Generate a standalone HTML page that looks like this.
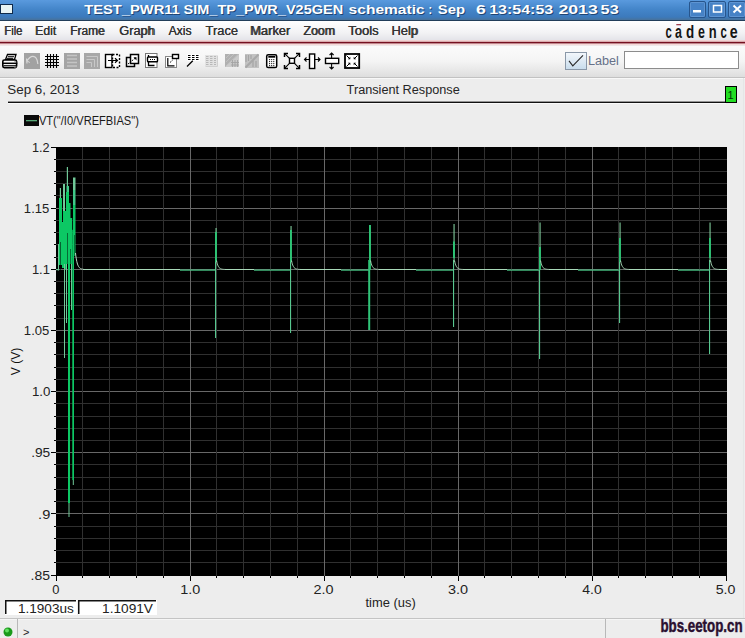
<!DOCTYPE html>
<html><head><meta charset="utf-8">
<style>
html,body{margin:0;padding:0;width:745px;height:638px;overflow:hidden;background:#ededed;}
svg{position:absolute;left:0;top:0;display:block;}
text{font-family:"Liberation Sans", sans-serif;}
</style></head><body>
<svg width="745" height="638" viewBox="0 0 745 638">
<defs>
<linearGradient id="tbg" x1="0" y1="0" x2="0" y2="1">
<stop offset="0" stop-color="#5a9ade"/><stop offset="0.45" stop-color="#4486ca"/><stop offset="0.85" stop-color="#3c7abc"/><stop offset="1" stop-color="#48729a"/>
</linearGradient>
<linearGradient id="mbg" x1="0" y1="0" x2="0" y2="1">
<stop offset="0" stop-color="#ffffff"/><stop offset="0.6" stop-color="#f2f2f4"/><stop offset="1" stop-color="#e2e2e8"/>
</linearGradient>
<linearGradient id="tbbg" x1="0" y1="0" x2="0" y2="1">
<stop offset="0" stop-color="#fbfbfb"/><stop offset="0.5" stop-color="#f4f4f4"/><stop offset="1" stop-color="#dedede"/>
</linearGradient>
</defs>
<!-- title bar -->
<rect x="0" y="0" width="745" height="20" fill="url(#tbg)"/>
<rect x="0" y="20" width="745" height="1" fill="#223e5a"/>
<!-- menu bar -->
<rect x="0" y="21" width="745" height="20" fill="url(#mbg)"/>
<rect x="0" y="40" width="745" height="2" fill="#f2d2d2"/>
<rect x="0" y="41.8" width="745" height="1.9" fill="#761020"/>
<rect x="0" y="43.6" width="745" height="1.6" fill="#f6d8d8"/>
<!-- toolbar -->
<rect x="0" y="46" width="745" height="31" fill="url(#tbbg)"/>
<rect x="0" y="77" width="745" height="1" fill="#c2c2c2"/>
<rect x="0" y="78" width="745" height="1" fill="#f8f8f8"/>

<!-- toolbar icons -->
<g fill="none" stroke="#000" stroke-linecap="square">
<!-- 1 printer -->
<path d="M7.5,54.5 H16 L14.5,59.5 H5.5 Z" fill="#fff" stroke-width="1.3"/>
<path d="M8.5,56.7 H13.5 M7.5,58.3 H12.5" stroke-width="1"/>
<rect x="2.8" y="60" width="13.8" height="7.6" rx="1.5" fill="#fff" stroke-width="1.6"/>
<path d="M3,63.3 H16.5" stroke-width="1.5"/>
<path d="M4,65.7 H15.5" stroke-width="1"/>
<path d="M14.5,62 h1.5 M14.5,67 h1.5" stroke="#888" stroke-width="1"/>
</g>
<!-- 2 undo grey -->
<rect x="24" y="53" width="16" height="16" fill="#a2a2a2"/>
<path d="M26.5,58.5 L27,63.5 M26.5,61.5 Q31,54.5 35,57 Q37.5,59 37.8,64" fill="none" stroke="#d8d8d8" stroke-width="1.2"/>
<path d="M27,61 L29.8,62.5" stroke="#d8d8d8" stroke-width="1"/>
<!-- 3 grid -->
<g stroke="#000" stroke-width="1.1">
<path d="M47.5,54 V68 M50.5,54 V68 M53.5,54 V68 M56.5,54 V68"/>
<path d="M45,56.5 H59 M45,59.5 H59 M45,62.5 H59 M45,65.5 H59"/>
</g>
<!-- 4 grey stripes -->
<rect x="64" y="53" width="16" height="16" fill="#a4a4a4"/>
<g stroke="#c4c4c4" stroke-width="1.3"><path d="M67,55.5 H77 M67,59 H77 M67,62.5 H77 M67,66 H77"/></g>
<!-- 5 grey multi -->
<rect x="84" y="53" width="16" height="16" fill="#a8a8a8"/>
<path d="M86.5,56.5 H97.5 V67 M86.5,59.5 H94.5 V67 M86.5,62.5 H91.5 V67" fill="none" stroke="#c8c8c8" stroke-width="1"/>
<!-- 6 split -->
<rect x="105.5" y="54.5" width="6.5" height="13" fill="#fff" stroke="#000" stroke-width="1.4"/>
<rect x="112.5" y="54.5" width="7" height="13" fill="#fff" stroke="#000" stroke-width="1.4" stroke-dasharray="2,1.5"/>
<path d="M108,60.5 H117.5 M115,58.3 L117.5,60.5 L115,62.7" fill="none" stroke="#000" stroke-width="1.2"/>
<!-- 7 two squares -->
<rect x="126.5" y="57.5" width="8" height="9" fill="#fff" stroke="#000" stroke-width="1.5"/>
<rect x="130.5" y="54.5" width="8" height="9" fill="#fff" stroke="#000" stroke-width="1.5"/>
<path d="M128,64 L136,57.5" stroke="#000" stroke-width="1" stroke-dasharray="1.5,1"/>
<path d="M133.5,57.3 H136.5 V60.5 Z" fill="#000"/>
<!-- 8 -->
<rect x="145.5" y="53.5" width="11.5" height="14" fill="#fff" stroke="#777" stroke-width="1"/>
<path d="M148.5,55 V65.5 H154.5" fill="none" stroke="#000" stroke-width="1.3"/>
<rect x="147.5" y="57" width="10" height="4.8" rx="0.8" fill="#fff" stroke="#000" stroke-width="1.4"/>
<path d="M150,59.5 h1 M152,59.5 h1 M154,59.5 h1" stroke="#000" stroke-width="1.2"/>
<!-- 9 -->
<rect x="165.5" y="56.5" width="11" height="11" fill="#fff" stroke="#888" stroke-width="1"/>
<path d="M167.8,58 V65.8 H174.5" fill="none" stroke="#000" stroke-width="1.2"/>
<rect x="172.5" y="54.5" width="6" height="4" fill="#fff" stroke="#000" stroke-width="1.4"/>
<path d="M170,62.5 L173,59.8" stroke="#000" stroke-width="1" stroke-dasharray="1.2,1"/>
<!-- 10 -->
<rect x="187.5" y="54" width="12.5" height="7" fill="#fff"/>
<g stroke="#000" stroke-width="1.1"><path d="M188,55.5 h2.5 M192,55.5 h2.5 M196,55.5 h2.5 M188,57.5 h2.5 M192,57.5 h2.5 M196,57.5 h2.5 M188,59.5 h2.5 M192,59.5 h2.5 M196,59.5 h2.5"/></g>
<path d="M187,66.5 L192.8,60.8" stroke="#000" stroke-width="1.3"/>
<!-- 11 faint table -->
<rect x="205" y="55" width="12" height="11" fill="#e2e2e2"/>
<g stroke="#b8b8b8" stroke-width="1"><path d="M206,56.5 h2.5 M210,56.5 h2.5 M214,56.5 h2 M206,58.5 h2.5 M210,58.5 h2.5 M214,58.5 h2 M206,60.5 h2.5 M210,60.5 h2.5 M214,60.5 h2 M206,62.5 h2.5 M210,62.5 h2.5 M214,62.5 h2 M206,64.5 h2.5 M210,64.5 h2.5 M214,64.5 h2"/></g>
<path d="M217.5,55.5 V66.5 H205.5" fill="none" stroke="#d0d0d0" stroke-width="1"/>
<!-- 12 grey diag -->
<rect x="225" y="54" width="14" height="13" fill="#cacaca"/>
<path d="M225,54 H239 L225,67 Z" fill="#b0b0b0"/>
<path d="M226,58 L230,54 M226,62 L234,54 M226,66 L238,54.5" stroke="#c4c4c4" stroke-width="0.8"/>
<path d="M232.5,60 V67 M235,60 V67 M237.5,60 V67 M231,62.5 H239 M231,65 H239" stroke="#a4a4a4" stroke-width="0.9"/>
<!-- 13 grey -->
<rect x="245" y="54" width="14" height="14" fill="#c2c2c2"/>
<path d="M246,55 V62 M248.5,55 V61 M251,55 V59" stroke="#a4a4a4" stroke-width="1.2"/>
<path d="M245.5,67.5 L258.5,54.5" stroke="#a8a8a8" stroke-width="2"/>
<path d="M253,61 V67 M256,61 V67" stroke="#a4a4a4" stroke-width="1.2"/>
<!-- 14 calculator -->
<rect x="266.7" y="54.7" width="10" height="12.8" rx="1.6" fill="#fff" stroke="#000" stroke-width="1.5"/>
<rect x="268.3" y="56" width="7" height="1.7" fill="#000"/>
<g fill="#000">
<circle cx="269.6" cy="59.6" r="0.6"/><circle cx="271.7" cy="59.6" r="0.6"/><circle cx="273.8" cy="59.6" r="0.6"/>
<circle cx="269.6" cy="61.6" r="0.6"/><circle cx="271.7" cy="61.6" r="0.6"/><circle cx="273.8" cy="61.6" r="0.6"/>
<circle cx="269.6" cy="63.6" r="0.6"/><circle cx="271.7" cy="63.6" r="0.6"/><circle cx="273.8" cy="63.6" r="0.6"/>
<circle cx="269.6" cy="65.6" r="0.6"/><circle cx="271.7" cy="65.6" r="0.6"/><circle cx="273.8" cy="65.6" r="0.6"/>
</g>
<!-- 15 expand -->
<rect x="289.5" y="58.3" width="5" height="5" fill="#fff" stroke="#000" stroke-width="1.4"/>
<g stroke="#000" stroke-width="1.1" fill="none">
<path d="M289.5,58.3 L285,53.8 M294.5,58.3 L299,53.8 M289.5,63.3 L285,67.8 M294.5,63.3 L299,67.8"/>
</g>
<g stroke="#000" stroke-width="1.5" fill="none">
<path d="M284.5,57 V53.5 H288 M296,53.5 H299.5 V57 M284.5,65 V68.5 H288 M296,68.5 H299.5 V65"/>
</g>
<!-- 16 horiz arrows -->
<rect x="309.5" y="54" width="5.2" height="14.5" fill="#fff" stroke="#000" stroke-width="1.4"/>
<path d="M304.5,59.5 H309 M315,59.5 H320 M306.5,57.5 L304.5,59.5 L306.5,61.5 M318,57.5 L320,59.5 L318,61.5" fill="none" stroke="#000" stroke-width="1.1"/>
<!-- 17 vert arrows -->
<rect x="325.5" y="58.3" width="13.2" height="5.2" fill="#fff" stroke="#000" stroke-width="1.4"/>
<path d="M331.6,53 V58 M331.6,64 V69 M329.6,55 L331.6,53 L333.6,55 M329.6,67 L331.6,69 L333.6,67" fill="none" stroke="#000" stroke-width="1.1"/>
<!-- 18 box inward -->
<rect x="345" y="54" width="14.2" height="14" fill="#fff" stroke="#000" stroke-width="1.8"/>
<g stroke="#000" stroke-width="1" fill="none"><path d="M346.5,55.5 L350,59 M357.5,55.5 L354,59 M346.5,66.5 L350,63 M357.5,66.5 L354,63"/></g>
<g fill="#000"><path d="M350.3,56.8 V59.3 H347.8 Z M353.7,56.8 V59.3 H356.2 Z M350.3,65.2 V62.7 H347.8 Z M353.7,65.2 V62.7 H356.2 Z"/></g>

<!-- window buttons -->
<g stroke="#27558c" stroke-width="1" fill="#4682c6">
<rect x="689.5" y="1.5" width="16" height="16" rx="1.5"/>
<rect x="708.5" y="1.5" width="17" height="16" rx="1.5"/>
<rect x="728.5" y="1.5" width="17" height="16" rx="1.5"/>
</g>
<g stroke="#6a9ed8" stroke-width="1" fill="none" opacity="0.7">
<rect x="690.5" y="2.5" width="14" height="14" rx="1"/>
<rect x="709.5" y="2.5" width="15" height="14" rx="1"/>
<rect x="729.5" y="2.5" width="15" height="14" rx="1"/>
</g>
<rect x="693" y="10" width="8" height="2.5" fill="#fff"/>
<rect x="713.5" y="5.5" width="8" height="6.5" fill="none" stroke="#fff" stroke-width="1.5"/>
<path d="M733.5,5.5 L741,12.5 M741,5.5 L733.5,12.5" stroke="#fff" stroke-width="2"/>
<!-- window icon -->
<rect x="0" y="4" width="13" height="10" fill="#0f2a4a"/>
<rect x="1" y="5" width="11" height="8" fill="#e8f4f4"/>
<!-- label checkbox -->
<defs><linearGradient id="cbg" x1="0" y1="0" x2="0" y2="1"><stop offset="0" stop-color="#f4f8fc"/><stop offset="1" stop-color="#c8dcec"/></linearGradient></defs>
<rect x="565.5" y="52.5" width="21" height="17" fill="url(#cbg)" stroke="#8a98a8"/>
<path d="M569,60.8 L572.8,65.8 L583,55.3" fill="none" stroke="#2a2a2a" stroke-width="1.1"/>
<!-- label input -->
<rect x="624.5" y="51.5" width="114" height="17" fill="#fff" stroke="#8c8c8c"/>
<!-- date line -->
<rect x="8" y="101.6" width="718" height="1.4" fill="#111"/>
<rect x="8" y="103" width="718" height="1" fill="#fafafa"/>
<rect x="725.5" y="86.5" width="11" height="16" fill="#22dd22" stroke="#000"/>
<!-- legend box -->
<rect x="24" y="115" width="15" height="11" fill="#0a0a0a"/>
<rect x="26" y="120" width="11" height="1.3" fill="#58a878"/>
<!-- marker value boxes -->
<rect x="5" y="600" width="72" height="15" fill="#fff"/>
<rect x="5" y="600" width="71" height="1.5" fill="#111"/>
<rect x="5" y="600" width="1.5" height="14" fill="#111"/>
<rect x="78" y="600" width="79" height="15" fill="#fff"/>
<rect x="78" y="600" width="78" height="1.5" fill="#111"/>
<rect x="78" y="600" width="1.5" height="14" fill="#111"/>
<!-- status bar -->
<rect x="0" y="618" width="745" height="1" fill="#c4c4c4"/>
<rect x="0" y="619" width="745" height="1" fill="#f6f6f6"/>
<rect x="17" y="619" width="1" height="19" fill="#b8b8b8"/>
<rect x="605" y="619" width="1" height="19" fill="#b8b8b8"/>
<circle cx="8" cy="632" r="4.5" fill="#1a9a1a"/>
<circle cx="7" cy="630.5" r="2" fill="#60e060"/>
<rect x="743" y="78" width="1" height="540" fill="#e6e6e6"/>

<!-- plot -->
<rect x="56" y="147" width="671" height="429" fill="#000"/>
<rect x="56" y="159" width="671" height="1" fill="#303030"/>
<rect x="56" y="171" width="671" height="1" fill="#303030"/>
<rect x="56" y="183" width="671" height="1" fill="#303030"/>
<rect x="56" y="195" width="671" height="1" fill="#303030"/>
<rect x="56" y="208" width="671" height="1" fill="#686868"/>
<rect x="56" y="220" width="671" height="1" fill="#303030"/>
<rect x="56" y="232" width="671" height="1" fill="#303030"/>
<rect x="56" y="244" width="671" height="1" fill="#303030"/>
<rect x="56" y="257" width="671" height="1" fill="#303030"/>
<rect x="56" y="269" width="671" height="1" fill="#686868"/>
<rect x="56" y="281" width="671" height="1" fill="#303030"/>
<rect x="56" y="293" width="671" height="1" fill="#303030"/>
<rect x="56" y="305" width="671" height="1" fill="#303030"/>
<rect x="56" y="318" width="671" height="1" fill="#303030"/>
<rect x="56" y="330" width="671" height="1" fill="#686868"/>
<rect x="56" y="342" width="671" height="1" fill="#303030"/>
<rect x="56" y="354" width="671" height="1" fill="#303030"/>
<rect x="56" y="367" width="671" height="1" fill="#303030"/>
<rect x="56" y="379" width="671" height="1" fill="#303030"/>
<rect x="56" y="391" width="671" height="1" fill="#686868"/>
<rect x="56" y="403" width="671" height="1" fill="#303030"/>
<rect x="56" y="416" width="671" height="1" fill="#303030"/>
<rect x="56" y="428" width="671" height="1" fill="#303030"/>
<rect x="56" y="440" width="671" height="1" fill="#303030"/>
<rect x="56" y="452" width="671" height="1" fill="#686868"/>
<rect x="56" y="464" width="671" height="1" fill="#303030"/>
<rect x="56" y="477" width="671" height="1" fill="#303030"/>
<rect x="56" y="489" width="671" height="1" fill="#303030"/>
<rect x="56" y="501" width="671" height="1" fill="#303030"/>
<rect x="56" y="513" width="671" height="1" fill="#686868"/>
<rect x="56" y="526" width="671" height="1" fill="#303030"/>
<rect x="56" y="538" width="671" height="1" fill="#303030"/>
<rect x="56" y="550" width="671" height="1" fill="#303030"/>
<rect x="56" y="562" width="671" height="1" fill="#303030"/>
<rect x="82" y="147" width="1" height="429" fill="#303030"/>
<rect x="109" y="147" width="1" height="429" fill="#303030"/>
<rect x="136" y="147" width="1" height="429" fill="#303030"/>
<rect x="163" y="147" width="1" height="429" fill="#303030"/>
<rect x="190" y="147" width="1" height="429" fill="#686868"/>
<rect x="216" y="147" width="1" height="429" fill="#303030"/>
<rect x="243" y="147" width="1" height="429" fill="#303030"/>
<rect x="270" y="147" width="1" height="429" fill="#303030"/>
<rect x="297" y="147" width="1" height="429" fill="#303030"/>
<rect x="324" y="147" width="1" height="429" fill="#686868"/>
<rect x="350" y="147" width="1" height="429" fill="#303030"/>
<rect x="377" y="147" width="1" height="429" fill="#303030"/>
<rect x="404" y="147" width="1" height="429" fill="#303030"/>
<rect x="431" y="147" width="1" height="429" fill="#303030"/>
<rect x="458" y="147" width="1" height="429" fill="#686868"/>
<rect x="484" y="147" width="1" height="429" fill="#303030"/>
<rect x="511" y="147" width="1" height="429" fill="#303030"/>
<rect x="538" y="147" width="1" height="429" fill="#303030"/>
<rect x="565" y="147" width="1" height="429" fill="#303030"/>
<rect x="592" y="147" width="1" height="429" fill="#686868"/>
<rect x="618" y="147" width="1" height="429" fill="#303030"/>
<rect x="645" y="147" width="1" height="429" fill="#303030"/>
<rect x="672" y="147" width="1" height="429" fill="#303030"/>
<rect x="699" y="147" width="1" height="429" fill="#303030"/>
<rect x="51" y="147" width="5" height="1" fill="#000"/>
<rect x="54" y="159" width="2" height="1" fill="#000"/>
<rect x="54" y="171" width="2" height="1" fill="#000"/>
<rect x="54" y="183" width="2" height="1" fill="#000"/>
<rect x="54" y="195" width="2" height="1" fill="#000"/>
<rect x="51" y="208" width="5" height="1" fill="#000"/>
<rect x="54" y="220" width="2" height="1" fill="#000"/>
<rect x="54" y="232" width="2" height="1" fill="#000"/>
<rect x="54" y="244" width="2" height="1" fill="#000"/>
<rect x="54" y="257" width="2" height="1" fill="#000"/>
<rect x="51" y="269" width="5" height="1" fill="#000"/>
<rect x="54" y="281" width="2" height="1" fill="#000"/>
<rect x="54" y="293" width="2" height="1" fill="#000"/>
<rect x="54" y="305" width="2" height="1" fill="#000"/>
<rect x="54" y="318" width="2" height="1" fill="#000"/>
<rect x="51" y="330" width="5" height="1" fill="#000"/>
<rect x="54" y="342" width="2" height="1" fill="#000"/>
<rect x="54" y="354" width="2" height="1" fill="#000"/>
<rect x="54" y="367" width="2" height="1" fill="#000"/>
<rect x="54" y="379" width="2" height="1" fill="#000"/>
<rect x="51" y="391" width="5" height="1" fill="#000"/>
<rect x="54" y="403" width="2" height="1" fill="#000"/>
<rect x="54" y="416" width="2" height="1" fill="#000"/>
<rect x="54" y="428" width="2" height="1" fill="#000"/>
<rect x="54" y="440" width="2" height="1" fill="#000"/>
<rect x="51" y="452" width="5" height="1" fill="#000"/>
<rect x="54" y="464" width="2" height="1" fill="#000"/>
<rect x="54" y="477" width="2" height="1" fill="#000"/>
<rect x="54" y="489" width="2" height="1" fill="#000"/>
<rect x="54" y="501" width="2" height="1" fill="#000"/>
<rect x="51" y="513" width="5" height="1" fill="#000"/>
<rect x="54" y="526" width="2" height="1" fill="#000"/>
<rect x="54" y="538" width="2" height="1" fill="#000"/>
<rect x="54" y="550" width="2" height="1" fill="#000"/>
<rect x="54" y="562" width="2" height="1" fill="#000"/>
<rect x="51" y="575" width="5" height="1" fill="#000"/>
<rect x="56" y="576" width="1" height="5" fill="#000"/>
<rect x="82" y="576" width="1" height="2" fill="#000"/>
<rect x="109" y="576" width="1" height="2" fill="#000"/>
<rect x="136" y="576" width="1" height="2" fill="#000"/>
<rect x="163" y="576" width="1" height="2" fill="#000"/>
<rect x="190" y="576" width="1" height="5" fill="#000"/>
<rect x="216" y="576" width="1" height="2" fill="#000"/>
<rect x="243" y="576" width="1" height="2" fill="#000"/>
<rect x="270" y="576" width="1" height="2" fill="#000"/>
<rect x="297" y="576" width="1" height="2" fill="#000"/>
<rect x="324" y="576" width="1" height="5" fill="#000"/>
<rect x="350" y="576" width="1" height="2" fill="#000"/>
<rect x="377" y="576" width="1" height="2" fill="#000"/>
<rect x="404" y="576" width="1" height="2" fill="#000"/>
<rect x="431" y="576" width="1" height="2" fill="#000"/>
<rect x="458" y="576" width="1" height="5" fill="#000"/>
<rect x="484" y="576" width="1" height="2" fill="#000"/>
<rect x="511" y="576" width="1" height="2" fill="#000"/>
<rect x="538" y="576" width="1" height="2" fill="#000"/>
<rect x="565" y="576" width="1" height="2" fill="#000"/>
<rect x="592" y="576" width="1" height="5" fill="#000"/>
<rect x="618" y="576" width="1" height="2" fill="#000"/>
<rect x="645" y="576" width="1" height="2" fill="#000"/>
<rect x="672" y="576" width="1" height="2" fill="#000"/>
<rect x="699" y="576" width="1" height="2" fill="#000"/>
<rect x="726" y="576" width="1" height="5" fill="#000"/>
<rect x="83" y="269" width="97" height="1" fill="#a8d8b8"/>
<rect x="180" y="269.5" width="35" height="1.2" fill="#48c484"/>
<rect x="215" y="260" width="1.1" height="78" fill="#58c890"/>
<rect x="215.5" y="228" width="1.1" height="34" fill="#80cc9c"/>
<rect x="215" y="232" width="1.9" height="30" fill="#2cc474"/>
<polyline points="216.50,260.50 216.88,262.28 217.25,263.71 217.62,264.86 218.00,265.78 218.38,266.51 218.75,267.10 219.12,267.58 219.50,267.96 219.88,268.26 220.25,268.51 220.62,268.70 221.00,268.86 221.38,268.99 221.75,269.09 222.12,269.17 222.50,269.24 222.88,269.29 223.25,269.33 223.62,269.36 224.00,269.39 224.38,269.41 224.75,269.43 225.12,269.44 225.50,269.45" fill="none" stroke="#a8d8b8" stroke-width="1"/>
<rect x="225" y="269" width="29" height="1" fill="#a8d8b8"/>
<rect x="254" y="269.5" width="36" height="1.2" fill="#48c484"/>
<rect x="290" y="260" width="1.1" height="73" fill="#58c890"/>
<rect x="290.5" y="226" width="1.1" height="36" fill="#80cc9c"/>
<rect x="290" y="230" width="1.9" height="32" fill="#2cc474"/>
<polyline points="291.50,260.50 291.88,262.28 292.25,263.71 292.62,264.86 293.00,265.78 293.38,266.51 293.75,267.10 294.12,267.58 294.50,267.96 294.88,268.26 295.25,268.51 295.62,268.70 296.00,268.86 296.38,268.99 296.75,269.09 297.12,269.17 297.50,269.24 297.88,269.29 298.25,269.33 298.62,269.36 299.00,269.39 299.38,269.41 299.75,269.43 300.12,269.44 300.50,269.45" fill="none" stroke="#a8d8b8" stroke-width="1"/>
<rect x="300" y="269" width="41" height="1" fill="#a8d8b8"/>
<rect x="341" y="269.5" width="28" height="1.2" fill="#48c484"/>
<rect x="368.2" y="260" width="2" height="70" fill="#30c478"/>
<rect x="369.5" y="225" width="1.1" height="37" fill="#80cc9c"/>
<rect x="369" y="225" width="1.9" height="45" fill="#2cc474"/>
<polyline points="370.50,260.50 370.88,262.28 371.25,263.71 371.62,264.86 372.00,265.78 372.38,266.51 372.75,267.10 373.12,267.58 373.50,267.96 373.88,268.26 374.25,268.51 374.62,268.70 375.00,268.86 375.38,268.99 375.75,269.09 376.12,269.17 376.50,269.24 376.88,269.29 377.25,269.33 377.62,269.36 378.00,269.39 378.38,269.41 378.75,269.43 379.12,269.44 379.50,269.45" fill="none" stroke="#a8d8b8" stroke-width="1"/>
<rect x="379" y="269" width="37" height="1" fill="#a8d8b8"/>
<rect x="416" y="269.5" width="37" height="1.2" fill="#48c484"/>
<rect x="453" y="260" width="1.1" height="67" fill="#58c890"/>
<rect x="453.5" y="224" width="1.1" height="38" fill="#80cc9c"/>
<rect x="453" y="241.5" width="1.9" height="16.5" fill="#2cc474"/>
<polyline points="454.50,260.50 454.88,262.28 455.25,263.71 455.62,264.86 456.00,265.78 456.38,266.51 456.75,267.10 457.12,267.58 457.50,267.96 457.88,268.26 458.25,268.51 458.62,268.70 459.00,268.86 459.38,268.99 459.75,269.09 460.12,269.17 460.50,269.24 460.88,269.29 461.25,269.33 461.62,269.36 462.00,269.39 462.38,269.41 462.75,269.43 463.12,269.44 463.50,269.45" fill="none" stroke="#a8d8b8" stroke-width="1"/>
<rect x="463" y="269" width="44" height="1" fill="#a8d8b8"/>
<rect x="507" y="269.5" width="32" height="1.2" fill="#48c484"/>
<rect x="539" y="260" width="1.1" height="99" fill="#58c890"/>
<rect x="539.5" y="222.5" width="1.1" height="39.5" fill="#80cc9c"/>
<rect x="539" y="247" width="1.9" height="23" fill="#2cc474"/>
<polyline points="540.50,260.50 540.88,262.28 541.25,263.71 541.62,264.86 542.00,265.78 542.38,266.51 542.75,267.10 543.12,267.58 543.50,267.96 543.88,268.26 544.25,268.51 544.62,268.70 545.00,268.86 545.38,268.99 545.75,269.09 546.12,269.17 546.50,269.24 546.88,269.29 547.25,269.33 547.62,269.36 548.00,269.39 548.38,269.41 548.75,269.43 549.12,269.44 549.50,269.45" fill="none" stroke="#a8d8b8" stroke-width="1"/>
<rect x="549" y="269" width="29" height="1" fill="#a8d8b8"/>
<rect x="578" y="269.5" width="41" height="1.2" fill="#48c484"/>
<rect x="619" y="260" width="1.1" height="63" fill="#58c890"/>
<rect x="619.5" y="222.5" width="1.1" height="39.5" fill="#80cc9c"/>
<rect x="619" y="238" width="1.9" height="24" fill="#2cc474"/>
<polyline points="620.50,260.50 620.88,262.28 621.25,263.71 621.62,264.86 622.00,265.78 622.38,266.51 622.75,267.10 623.12,267.58 623.50,267.96 623.88,268.26 624.25,268.51 624.62,268.70 625.00,268.86 625.38,268.99 625.75,269.09 626.12,269.17 626.50,269.24 626.88,269.29 627.25,269.33 627.62,269.36 628.00,269.39 628.38,269.41 628.75,269.43 629.12,269.44 629.50,269.45" fill="none" stroke="#a8d8b8" stroke-width="1"/>
<rect x="629" y="269" width="49" height="1" fill="#a8d8b8"/>
<rect x="678" y="269.5" width="31" height="1.2" fill="#48c484"/>
<rect x="709" y="260" width="1.1" height="94" fill="#58c890"/>
<rect x="709.5" y="222.5" width="1.1" height="39.5" fill="#80cc9c"/>
<rect x="709" y="238" width="1.9" height="20" fill="#2cc474"/>
<polyline points="710.50,260.50 710.88,262.28 711.25,263.71 711.62,264.86 712.00,265.78 712.38,266.51 712.75,267.10 713.12,267.58 713.50,267.96 713.88,268.26 714.25,268.51 714.62,268.70 715.00,268.86 715.38,268.99 715.75,269.09 716.12,269.17 716.50,269.24 716.88,269.29 717.25,269.33 717.62,269.36 718.00,269.39 718.38,269.41 718.75,269.43 719.12,269.44 719.50,269.45" fill="none" stroke="#a8d8b8" stroke-width="1"/>
<rect x="719" y="269" width="8" height="1" fill="#a8d8b8"/>
<rect x="56" y="269" width="2.5" height="1.2" fill="#70c898"/>
<rect x="58" y="244" width="1.00" height="26.50" fill="#70c898"/>
<rect x="59.8" y="188" width="1.20" height="10.00" fill="#70c898"/>
<rect x="59" y="198" width="3.00" height="67.00" fill="#0cc864"/>
<rect x="63" y="184" width="2.00" height="27.00" fill="#70c898"/>
<rect x="63" y="211" width="2.00" height="57.00" fill="#0cc864"/>
<rect x="66.8" y="167" width="1.20" height="19.00" fill="#70c898"/>
<rect x="66.5" y="186" width="2.50" height="6.00" fill="#40c888"/>
<rect x="66" y="192" width="3.00" height="11.00" fill="#0cc864"/>
<rect x="66" y="203" width="4.50" height="15.00" fill="#0cc864"/>
<rect x="66" y="218" width="6.30" height="46.00" fill="#0cc864"/>
<rect x="62" y="222" width="4.00" height="46.00" fill="#0cc864"/>
<rect x="65" y="211" width="1.00" height="58.00" fill="#0cc864"/>
<rect x="73" y="177.5" width="2.50" height="12.50" fill="#70c898"/>
<rect x="73" y="190" width="2.50" height="15.00" fill="#40c888"/>
<rect x="73" y="205" width="2.50" height="51.00" fill="#0cc864"/>
<rect x="72.3" y="230" width="1.70" height="250.00" fill="#0cc864"/>
<rect x="72.8" y="480" width="1.00" height="5.00" fill="#70c898"/>
<rect x="68" y="250" width="2.00" height="253.00" fill="#0cc864"/>
<rect x="68.5" y="503" width="1.00" height="14.00" fill="#70c898"/>
<rect x="64" y="264" width="1.00" height="94.00" fill="#70c898"/>
<rect x="66" y="264" width="1.00" height="59.00" fill="#70c898"/>
<rect x="71" y="264" width="1.00" height="46.00" fill="#70c898"/>
<rect x="61" y="264" width="1.00" height="1.00" fill="#0cc864"/>
<rect x="62.2" y="184" width="0.60" height="38.00" fill="#000" opacity="0.85"/>
<rect x="65.2" y="184" width="0.60" height="27.00" fill="#000" opacity="0.85"/>
<rect x="67.05" y="233" width="0.55" height="31.00" fill="#000" opacity="0.85"/>
<rect x="60.2" y="242" width="0.60" height="28.00" fill="#000" opacity="0.85"/>
<rect x="70.05" y="249" width="0.55" height="15.00" fill="#000" opacity="0.85"/>
<rect x="72.3" y="177" width="0.50" height="52.00" fill="#000" opacity="0.85"/>
<rect x="74.2" y="235" width="0.50" height="21.00" fill="#000" opacity="0.85"/>
<polyline points="75.50,253.00 75.83,255.79 76.17,258.11 76.50,260.03 76.83,261.63 77.17,262.96 77.50,264.07 77.83,264.99 78.17,265.75 78.50,266.38 78.83,266.91 79.17,267.35 79.50,267.71 79.83,268.01 80.17,268.27 80.50,268.47 80.83,268.65 81.17,268.79 81.50,268.91 81.83,269.01 82.17,269.09 82.50,269.16 82.83,269.22 83.17,269.27 83.50,269.31" fill="none" stroke="#b8dcc4" stroke-width="1"/>
<text x="4.7" y="35" font-size="12.5" fill="#262626" font-weight="normal" text-anchor="start" textLength="17.4" lengthAdjust="spacingAndGlyphs" >File</text><text x="35.6" y="35" font-size="12.5" fill="#262626" font-weight="normal" text-anchor="start" textLength="20.5" lengthAdjust="spacingAndGlyphs" >Edit</text><text x="70.5" y="35" font-size="12.5" fill="#262626" font-weight="normal" text-anchor="start" textLength="33.9" lengthAdjust="spacingAndGlyphs" >Frame</text><text x="119.5" y="35" font-size="12.5" fill="#262626" font-weight="normal" text-anchor="start" textLength="34.8" lengthAdjust="spacingAndGlyphs" >Graph</text><text x="168.4" y="35" font-size="12.5" fill="#262626" font-weight="normal" text-anchor="start" textLength="23.3" lengthAdjust="spacingAndGlyphs" >Axis</text><text x="205.6" y="35" font-size="12.5" fill="#262626" font-weight="normal" text-anchor="start" textLength="32.4" lengthAdjust="spacingAndGlyphs" >Trace</text><text x="250.7" y="35" font-size="12.5" fill="#262626" font-weight="normal" text-anchor="start" textLength="39.8" lengthAdjust="spacingAndGlyphs" >Marker</text><text x="303.3" y="35" font-size="12.5" fill="#262626" font-weight="normal" text-anchor="start" textLength="31.3" lengthAdjust="spacingAndGlyphs" >Zoom</text><text x="348.4" y="35" font-size="12.5" fill="#262626" font-weight="normal" text-anchor="start" textLength="30.4" lengthAdjust="spacingAndGlyphs" >Tools</text><text x="391.8" y="35" font-size="12.5" fill="#262626" font-weight="normal" text-anchor="start" textLength="25.7" lengthAdjust="spacingAndGlyphs" >Help</text><text x="85.2" y="15" font-size="13" font-weight="bold" fill="#16325a" opacity="0.75" textLength="95.62" lengthAdjust="spacingAndGlyphs">TEST_PWR11</text><text x="84.20" y="14" font-size="13" font-weight="bold" fill="#fff" textLength="95.62" lengthAdjust="spacingAndGlyphs">TEST_PWR11</text><text x="184.6" y="15" font-size="13" font-weight="bold" fill="#16325a" opacity="0.75" textLength="159.51" lengthAdjust="spacingAndGlyphs">SIM_TP_PWR_V25GEN</text><text x="183.60" y="14" font-size="13" font-weight="bold" fill="#fff" textLength="159.51" lengthAdjust="spacingAndGlyphs">SIM_TP_PWR_V25GEN</text><text x="349.6" y="15" font-size="13" font-weight="bold" fill="#16325a" opacity="0.75" textLength="76.06" lengthAdjust="spacingAndGlyphs">schematic</text><text x="348.60" y="14" font-size="13" font-weight="bold" fill="#fff" textLength="76.06" lengthAdjust="spacingAndGlyphs">schematic</text><text x="429.4" y="15" font-size="13" font-weight="bold" fill="#16325a" opacity="0.75" textLength="3.60" lengthAdjust="spacingAndGlyphs">:</text><text x="428.40" y="14" font-size="13" font-weight="bold" fill="#fff" textLength="3.60" lengthAdjust="spacingAndGlyphs">:</text><text x="438.78000000000003" y="15" font-size="13" font-weight="bold" fill="#16325a" opacity="0.75" textLength="27.30" lengthAdjust="spacingAndGlyphs">Sep</text><text x="437.78" y="14" font-size="13" font-weight="bold" fill="#fff" textLength="27.30" lengthAdjust="spacingAndGlyphs">Sep</text><text x="476.96" y="15" font-size="13" font-weight="bold" fill="#16325a" opacity="0.75" textLength="9.82" lengthAdjust="spacingAndGlyphs">6</text><text x="475.96" y="14" font-size="13" font-weight="bold" fill="#fff" textLength="9.82" lengthAdjust="spacingAndGlyphs">6</text><text x="490.15999999999997" y="15" font-size="13" font-weight="bold" fill="#16325a" opacity="0.75" textLength="64.06" lengthAdjust="spacingAndGlyphs">13:54:53</text><text x="489.16" y="14" font-size="13" font-weight="bold" fill="#fff" textLength="64.06" lengthAdjust="spacingAndGlyphs">13:54:53</text><text x="559.4" y="15" font-size="13" font-weight="bold" fill="#16325a" opacity="0.75" textLength="39.46" lengthAdjust="spacingAndGlyphs">2013</text><text x="558.40" y="14" font-size="13" font-weight="bold" fill="#fff" textLength="39.46" lengthAdjust="spacingAndGlyphs">2013</text><text x="601.6" y="15" font-size="13" font-weight="bold" fill="#16325a" opacity="0.75" textLength="18.13" lengthAdjust="spacingAndGlyphs">53</text><text x="600.60" y="14" font-size="13" font-weight="bold" fill="#fff" textLength="18.13" lengthAdjust="spacingAndGlyphs">53</text><text x="4.10" y="35" font-size="12.5" font-weight="normal" fill="#363636" textLength="18.67" lengthAdjust="spacingAndGlyphs">File</text><text x="34.84" y="35" font-size="12.5" font-weight="normal" fill="#363636" textLength="21.55" lengthAdjust="spacingAndGlyphs">Edit</text><text x="69.90" y="35" font-size="12.5" font-weight="normal" fill="#363636" textLength="35.32" lengthAdjust="spacingAndGlyphs">Frame</text><text x="118.90" y="35" font-size="12.5" font-weight="normal" fill="#363636" textLength="36.64" lengthAdjust="spacingAndGlyphs">Graph</text><text x="168.76" y="35" font-size="12.5" font-weight="normal" fill="#363636" textLength="22.86" lengthAdjust="spacingAndGlyphs">Axis</text><text x="205.64" y="35" font-size="12.5" font-weight="normal" fill="#363636" textLength="32.62" lengthAdjust="spacingAndGlyphs">Trace</text><text x="249.78" y="35" font-size="12.5" font-weight="normal" fill="#363636" textLength="40.42" lengthAdjust="spacingAndGlyphs">Marker</text><text x="303.82" y="35" font-size="12.5" font-weight="normal" fill="#363636" textLength="31.75" lengthAdjust="spacingAndGlyphs">Zoom</text><text x="347.96" y="35" font-size="12.5" font-weight="normal" fill="#363636" textLength="30.61" lengthAdjust="spacingAndGlyphs">Tools</text><text x="391.20" y="35" font-size="12.5" font-weight="normal" fill="#363636" textLength="27.37" lengthAdjust="spacingAndGlyphs">Help</text><text x="587.90" y="65" font-size="12.5" font-weight="normal" fill="#667088" textLength="31.00" lengthAdjust="spacingAndGlyphs">Label</text><text x="7.30" y="94" font-size="12.5" font-weight="normal" fill="#262626" textLength="72.20" lengthAdjust="spacingAndGlyphs">Sep 6, 2013</text><text x="346.64" y="94" font-size="12.5" font-weight="normal" fill="#262626" textLength="113.14" lengthAdjust="spacingAndGlyphs">Transient Response</text><text x="38.90" y="125" font-size="12" font-weight="normal" fill="#1a1a1a" textLength="99.98" lengthAdjust="spacingAndGlyphs">VT(&quot;/I0/VREFBIAS&quot;)</text><text x="365.50" y="607" font-size="12" font-weight="normal" fill="#222" textLength="50.20" lengthAdjust="spacingAndGlyphs">time (us)</text><text x="17.90" y="612.7" font-size="12" font-weight="normal" fill="#222" textLength="55.90" lengthAdjust="spacingAndGlyphs">1.1903us</text><text x="102.10" y="612.7" font-size="12" font-weight="normal" fill="#222" textLength="50.90" lengthAdjust="spacingAndGlyphs">1.1091V</text><text x="660.40" y="631.6" font-size="17.5" font-weight="bold" fill="#2a1030" textLength="82.20" lengthAdjust="spacingAndGlyphs" stroke="#2a1030" stroke-width="0.45">bbs.eetop.cn</text><text x="31.90" y="152" font-size="12" font-weight="normal" fill="#222" textLength="17.60" lengthAdjust="spacingAndGlyphs">1.2</text><text x="23.86" y="213" font-size="12" font-weight="normal" fill="#222" textLength="25.44" lengthAdjust="spacingAndGlyphs">1.15</text><text x="31.90" y="274" font-size="12" font-weight="normal" fill="#222" textLength="18.06" lengthAdjust="spacingAndGlyphs">1.1</text><text x="23.86" y="335" font-size="12" font-weight="normal" fill="#222" textLength="25.44" lengthAdjust="spacingAndGlyphs">1.05</text><text x="31.90" y="396" font-size="12" font-weight="normal" fill="#222" textLength="18.53" lengthAdjust="spacingAndGlyphs">1.0</text><text x="31.20" y="457" font-size="12" font-weight="normal" fill="#222" textLength="19.06" lengthAdjust="spacingAndGlyphs">.95</text><text x="38.10" y="518.5" font-size="12" font-weight="normal" fill="#222" textLength="12.20" lengthAdjust="spacingAndGlyphs">.9</text><text x="30.60" y="580" font-size="12" font-weight="normal" fill="#222" textLength="19.47" lengthAdjust="spacingAndGlyphs">.85</text><text x="52.30" y="594" font-size="12" font-weight="normal" fill="#222" textLength="7.20" lengthAdjust="spacingAndGlyphs">0</text><text x="180.30" y="594" font-size="12" font-weight="normal" fill="#222" textLength="20.05" lengthAdjust="spacingAndGlyphs">1.0</text><text x="313.48" y="594" font-size="12" font-weight="normal" fill="#222" textLength="20.05" lengthAdjust="spacingAndGlyphs">2.0</text><text x="447.94" y="594" font-size="12" font-weight="normal" fill="#222" textLength="20.11" lengthAdjust="spacingAndGlyphs">3.0</text><text x="582.32" y="594" font-size="12" font-weight="normal" fill="#222" textLength="19.44" lengthAdjust="spacingAndGlyphs">4.0</text><text x="715.70" y="594" font-size="12" font-weight="normal" fill="#222" textLength="19.70" lengthAdjust="spacingAndGlyphs">5.0</text><text x="0" y="0" font-size="12" fill="#111" textLength="27.5" lengthAdjust="spacingAndGlyphs" transform="translate(19.6,375.2) rotate(-90)">V (V)</text><text x="665.4" y="37.6" font-size="17.5" font-weight="bold" fill="#141414" textLength="6.3" lengthAdjust="spacingAndGlyphs">c</text><text x="675.1" y="37.6" font-size="17.5" font-weight="bold" fill="#141414" textLength="6.9" lengthAdjust="spacingAndGlyphs">a</text><text x="686.1" y="37.6" font-size="17.5" font-weight="bold" fill="#141414" textLength="8.2" lengthAdjust="spacingAndGlyphs">d</text><text x="698.0" y="37.6" font-size="17.5" font-weight="bold" fill="#141414" textLength="6.9" lengthAdjust="spacingAndGlyphs">e</text><text x="708.8" y="37.6" font-size="17.5" font-weight="bold" fill="#141414" textLength="7.9" lengthAdjust="spacingAndGlyphs">n</text><text x="720.6" y="37.6" font-size="17.5" font-weight="bold" fill="#141414" textLength="6.3" lengthAdjust="spacingAndGlyphs">c</text><text x="729.8" y="37.6" font-size="17.5" font-weight="bold" fill="#141414" textLength="7.9" lengthAdjust="spacingAndGlyphs">e</text><rect x="676.3" y="24" width="4.8" height="1.3" fill="#a04050"/><text x="727.5" y="99" font-size="11" fill="#063006" font-weight="normal" text-anchor="start" >1</text><text x="23" y="636" font-size="11" fill="#222" font-weight="normal" text-anchor="start" >&gt;</text>
</svg>
</body></html>
